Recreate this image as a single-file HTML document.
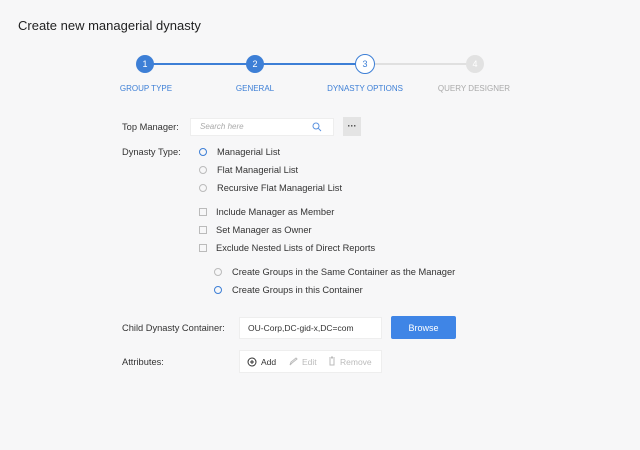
<!DOCTYPE html>
<html><head><style>
body{margin:0;width:640px;height:450px;background:#f7f7f8;font-family:"Liberation Sans",sans-serif;position:relative;overflow:hidden;color:#333}
.a{position:absolute;white-space:nowrap}
.c{position:absolute;width:18px;height:18px;border-radius:50%;font-size:9px;line-height:18px;text-align:center;color:#fff;top:55px}
.l{position:absolute;top:84px;font-size:8px;color:#3d7fd6;transform:translateX(-50%)}
.t{font-size:9.3px;color:#333}
.r{position:absolute;width:6px;height:6px;border:1px solid #bbb;border-radius:50%}
.b{position:absolute;width:6px;height:6px;border:1px solid #bbb}
</style></head><body>
<div class="a" style="left:18px;top:18px;font-size:13px;color:#222">Create new managerial dynasty</div>
<div class="a" style="left:145px;top:63px;width:220px;height:2px;background:#3d7fd6"></div>
<div class="a" style="left:365px;top:63px;width:110px;height:2px;background:#e0e0e0"></div>
<div class="c" style="left:136px;background:#3d7fd6">1</div>
<div class="c" style="left:246px;background:#3d7fd6">2</div>
<div class="c" style="left:355px;background:#fff;border:1px solid #3d7fd6;color:#3d7fd6;top:54px">3</div>
<div class="c" style="left:466px;background:#e2e2e2">4</div>
<div class="l" style="left:146px">GROUP TYPE</div>
<div class="l" style="left:255px">GENERAL</div>
<div class="l" style="left:365px">DYNASTY OPTIONS</div>
<div class="l" style="left:474px;color:#aaa">QUERY DESIGNER</div>

<div class="a t" style="left:122px;top:122px">Top Manager:</div>
<div class="a" style="left:190px;top:118px;width:144px;height:18px;background:#fff;border:1px solid #eee;box-sizing:border-box"></div>
<div class="a" style="left:200px;top:122px;font-size:8px;font-style:italic;color:#aaa">Search here</div>
<svg class="a" style="left:312px;top:122px" width="10" height="10"><circle cx="4" cy="4" r="3" fill="none" stroke="#5b93e0" stroke-width="1"/><line x1="6.2" y1="6.2" x2="9" y2="9" stroke="#5b93e0"/></svg>
<div class="a" style="left:343px;top:117px;width:18px;height:19px;background:#e4e4e4;font-size:9px;text-align:center;line-height:19px;font-weight:bold">···</div>

<div class="a t" style="left:122px;top:147px">Dynasty Type:</div>
<div class="r" style="left:199px;top:148px;border-color:#3d7fd6"></div><div class="a t" style="left:217px;top:147px">Managerial List</div>
<div class="r" style="left:199px;top:166px"></div><div class="a t" style="left:217px;top:165px">Flat Managerial List</div>
<div class="r" style="left:199px;top:184px"></div><div class="a t" style="left:217px;top:183px">Recursive Flat Managerial List</div>
<div class="b" style="left:199px;top:208px"></div><div class="a t" style="left:216px;top:207px">Include Manager as Member</div>
<div class="b" style="left:199px;top:226px"></div><div class="a t" style="left:216px;top:225px">Set Manager as Owner</div>
<div class="b" style="left:199px;top:244px"></div><div class="a t" style="left:216px;top:243px">Exclude Nested Lists of Direct Reports</div>
<div class="r" style="left:214px;top:268px"></div><div class="a t" style="left:232px;top:267px">Create Groups in the Same Container as the Manager</div>
<div class="r" style="left:214px;top:286px;border-color:#3d7fd6"></div><div class="a t" style="left:232px;top:285px">Create Groups in this Container</div>

<div class="a t" style="left:122px;top:323px">Child Dynasty Container:</div>
<div class="a" style="left:239px;top:317px;width:143px;height:22px;background:#fff;border:1px solid #eee;box-sizing:border-box"></div>
<div class="a" style="left:248px;top:323px;font-size:8.5px;color:#333">OU-Corp,DC-gid-x,DC=com</div>
<div class="a" style="left:391px;top:316px;width:65px;height:23px;background:#3f85e6;border-radius:2px;color:#fff;font-size:9px;text-align:center;line-height:24px">Browse</div>

<div class="a t" style="left:122px;top:357px">Attributes:</div>
<div class="a" style="left:239px;top:350px;width:143px;height:23px;background:#fff;border:1px solid #eee;box-sizing:border-box"></div>
<svg class="a" style="left:247px;top:357px" width="10" height="10"><circle cx="5" cy="5" r="4" fill="none" stroke="#333"/><path d="M5 3v4M3 5h4" stroke="#333"/></svg>
<div class="a" style="left:261px;top:357px;font-size:8.5px;color:#333">Add</div>
<svg class="a" style="left:288px;top:357px" width="10" height="10"><path d="M2 8l1-3 5-4 1 1-5 4z" fill="none" stroke="#bbb"/></svg>
<div class="a" style="left:302px;top:357px;font-size:8.5px;color:#bbb">Edit</div>
<svg class="a" style="left:327px;top:356px" width="10" height="10"><path d="M2 2h6M3 3v6h4V3M4 1h2" fill="none" stroke="#bbb"/></svg>
<div class="a" style="left:340px;top:357px;font-size:8.5px;color:#bbb">Remove</div>
</body></html>
